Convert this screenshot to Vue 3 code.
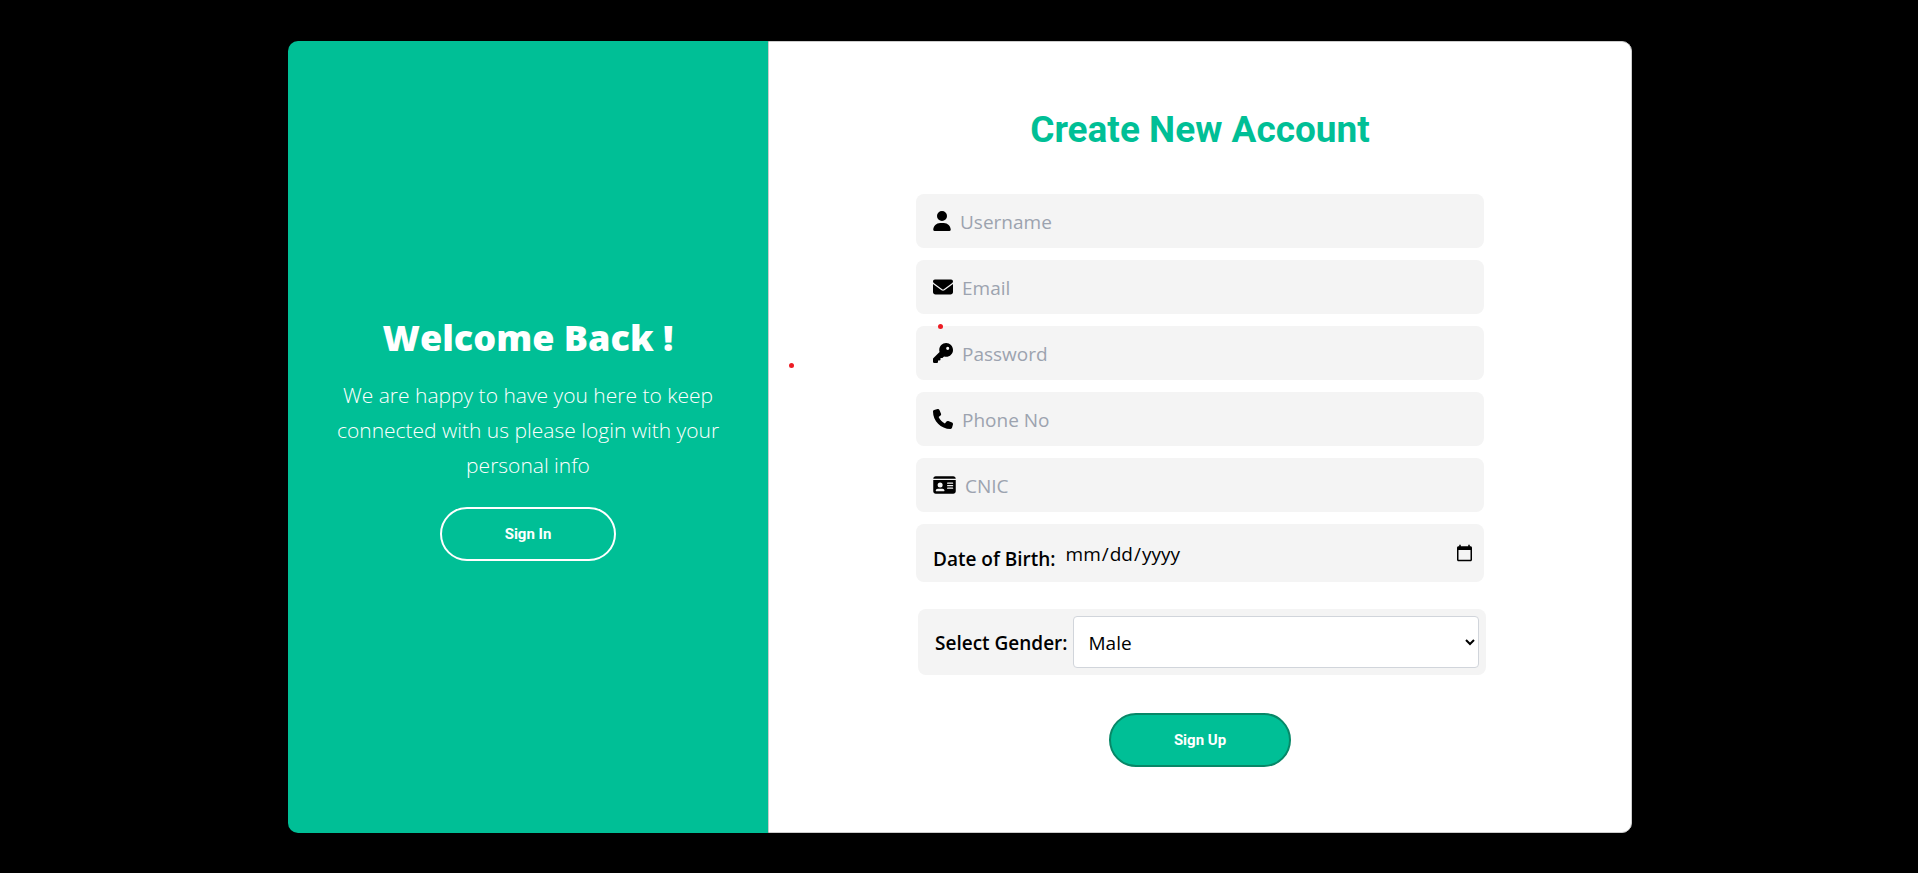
<script setup>
import { reactive } from 'vue'

const fields = [
  {
    id: 'username', label: 'Username', type: 'text', width: 18, viewBox: '0 0 448 512',
    path: 'M224 256A128 128 0 1 0 224 0a128 128 0 1 0 0 256zm-45.7 48C79.8 304 0 383.8 0 482.3C0 498.7 13.3 512 29.7 512H418.3c16.4 0 29.7-13.3 29.7-29.7C448 383.8 368.2 304 269.7 304H178.3z'
  },
  {
    id: 'email', label: 'Email', type: 'email', width: 20, viewBox: '0 0 512 512',
    path: 'M48 64C21.5 64 0 85.5 0 112c0 15.1 7.1 29.3 19.2 38.4L236.8 313.6c11.4 8.5 27 8.5 38.4 0L492.8 150.4c12.1-9.1 19.2-23.3 19.2-38.4c0-26.5-21.5-48-48-48H48zM0 176V384c0 35.3 28.7 64 64 64H448c35.3 0 64-28.7 64-64V176L294.4 339.2c-22.8 17.1-54 17.1-76.8 0L0 176z'
  },
  {
    id: 'password', label: 'Password', type: 'password', width: 20, viewBox: '0 0 512 512', marked: true,
    path: 'M336 352c97.2 0 176-78.8 176-176S433.2 0 336 0S160 78.8 160 176c0 18.7 2.9 36.8 8.3 53.7L7 391c-4.5 4.5-7 10.6-7 17v80c0 13.3 10.7 24 24 24h80c13.3 0 24-10.7 24-24V448h40c13.3 0 24-10.7 24-24V384h40c6.4 0 12.5-2.5 17-7l33.3-33.3c16.9 5.4 35 8.3 53.7 8.3zM376 96a40 40 0 1 1 0 80 40 40 0 1 1 0-80z'
  },
  {
    id: 'phone', label: 'Phone No', type: 'tel', width: 20, viewBox: '0 0 512 512',
    path: 'M164.9 24.6c-7.7-18.6-28-28.5-47.4-23.2l-88 24C12.1 30.2 0 46 0 64C0 311.4 200.6 512 448 512c18 0 33.8-12.1 38.6-29.5l24-88c5.3-19.4-4.6-39.7-23.2-47.4l-96-40c-16.3-6.8-35.2-2.1-46.3 11.6L304.7 368C234.3 334.7 177.3 277.7 144 207.3L193.3 167c13.7-11.2 18.4-30 11.6-46.3l-40-96z'
  },
  {
    id: 'cnic', label: 'CNIC', type: 'text', width: 23, viewBox: '0 0 576 512',
    path: 'M0 96l576 0c0-35.3-28.7-64-64-64H64C28.7 32 0 60.7 0 96zm0 32V416c0 35.3 28.7 64 64 64H512c35.3 0 64-28.7 64-64V128H0zM64 405.3c0-29.5 23.9-53.3 53.3-53.3H234.7c29.5 0 53.3 23.9 53.3 53.3c0 5.9-4.8 10.7-10.7 10.7H74.7c-5.9 0-10.7-4.8-10.7-10.7zM176 192a64 64 0 1 1 0 128 64 64 0 1 1 0-128zm176 16c0-8.8 7.2-16 16-16H496c8.8 0 16 7.2 16 16s-7.2 16-16 16H368c-8.8 0-16-7.2-16-16zm0 64c0-8.8 7.2-16 16-16H496c8.8 0 16 7.2 16 16s-7.2 16-16 16H368c-8.8 0-16-7.2-16-16zm0 64c0-8.8 7.2-16 16-16H496c8.8 0 16 7.2 16 16s-7.2 16-16 16H368c-8.8 0-16-7.2-16-16z'
  }
]

const form = reactive({ username: '', email: '', password: '', phone: '', cnic: '', birth: '', gender: 'Male' })
</script>

<template>
  <main class="page">
    <div class="card">
      <section class="welcome">
        <h2 class="welcome-title">Welcome Back !</h2>
        <p class="welcome-text">We are happy to have you here to keep connected with us please login with your personal info</p>
        <button class="pill sign-in" type="button">Sign In</button>
      </section>
      <section class="signup">
        <span class="dot panel-dot"></span>
        <h1 class="signup-title">Create New Account</h1>
        <form class="form" @submit.prevent>
          <div v-for="f in fields" :key="f.id" class="row">
            <span v-if="f.marked" class="dot row-dot"></span>
            <label class="icon-label" :for="f.id" :aria-label="f.label">
              <svg :width="f.width" height="20" :viewBox="f.viewBox" aria-hidden="true"><path :d="f.path" /></svg>
            </label>
            <input :id="f.id" v-model="form[f.id]" class="field" :type="f.type" :placeholder="f.label" />
          </div>
          <div class="row birth-row">
            <label class="text-label" for="birth">Date of Birth:</label>
            <input id="birth" v-model="form.birth" class="field" type="date" />
          </div>
          <div class="row gender-row">
            <label class="text-label" for="gender">Select Gender:</label>
            <select id="gender" v-model="form.gender" class="select">
              <option>Male</option>
              <option>Female</option>
              <option>Other</option>
            </select>
          </div>
          <button class="pill sign-up" type="submit">Sign Up</button>
        </form>
      </section>
    </div>
  </main>
</template>

<style>
body {
  background: #000;
}
</style>

<style scoped>
* {
  box-sizing: border-box;
}
.page {
  min-height: 100vh;
  display: flex;
  align-items: center;
  justify-content: center;
  padding-left: 2px;
  font-family: "Open Sans", "Noto Sans", sans-serif;
  font-size: 19px;
  color: #000;
}
.card {
  display: grid;
  grid-template-columns: 5fr 9fr;
  width: 90%;
  max-width: 1344px;
}
.welcome {
  display: flex;
  flex-direction: column;
  align-items: center;
  justify-content: center;
  padding: 6px 40px 0;
  background: #00bf96;
  border-radius: 10px 0 0 10px;
  color: #fff;
  text-align: center;
}
.welcome-title {
  margin: 0;
  font-size: 36px;
  line-height: 40px;
  font-weight: 800;
}
.welcome-text {
  margin: 20px 0 24px;
  font-size: 21px;
  line-height: 35px;
  font-weight: 300;
}
.pill {
  height: 54px;
  border-radius: 27px;
  font: 700 15px "Roboto", sans-serif;
  color: #fff;
  cursor: pointer;
}
.sign-in {
  width: 176px;
  background: transparent;
  border: 2px solid #fff;
}
.signup {
  position: relative;
  padding: 64px 16px 65px;
  background: #fff;
  border: 1px solid #ccc;
  border-radius: 0 10px 10px 0;
}
.signup-title {
  margin: 0 0 40px;
  font: 700 37px/48px "Roboto", sans-serif;
  color: #00bf96;
  text-align: center;
}
.form {
  display: flex;
  flex-direction: column;
  gap: 12px;
  max-width: 568px;
  margin: 0 auto;
}
.row {
  position: relative;
  display: flex;
  align-items: center;
  height: 54px;
  padding: 0 8px 0 17px;
  background: #f4f4f4;
  border-radius: 8px;
}
.icon-label {
  display: flex;
  margin-right: 9px;
}
.field {
  flex: 1;
  min-width: 0;
  padding: 2px 0 0;
  border: 0;
  outline: 0;
  background: transparent;
  font: inherit;
  color: inherit;
}
.field::placeholder {
  color: #9ca3af;
  opacity: 1;
}
.text-label {
  font-weight: 600;
}
.birth-row {
  height: 58px;
}
.birth-row .text-label {
  padding-top: 12px;
  margin-right: 9px;
}
.gender-row {
  height: 66px;
  margin: 15px -2px 0 2px;
  padding: 7px 7px 7px 17px;
}
.gender-row .text-label {
  padding-top: 2px;
  margin-right: 5px;
}
.select {
  flex: 1;
  min-width: 0;
  height: 52px;
  padding: 2px 11px 0;
  border: 1px solid #d1d5db;
  border-radius: 4px;
  background: #fff;
  font: inherit;
  color: inherit;
}
.sign-up {
  width: 182px;
  margin: 26px auto 0;
  background: #00bf96;
  border: 2px solid #078767;
}
.dot {
  position: absolute;
  width: 5px;
  height: 5px;
  border-radius: 50%;
  background: #ed1c24;
}
.panel-dot {
  left: 20px;
  top: 321px;
}
.row-dot {
  left: 22px;
  top: -2px;
}
</style>
